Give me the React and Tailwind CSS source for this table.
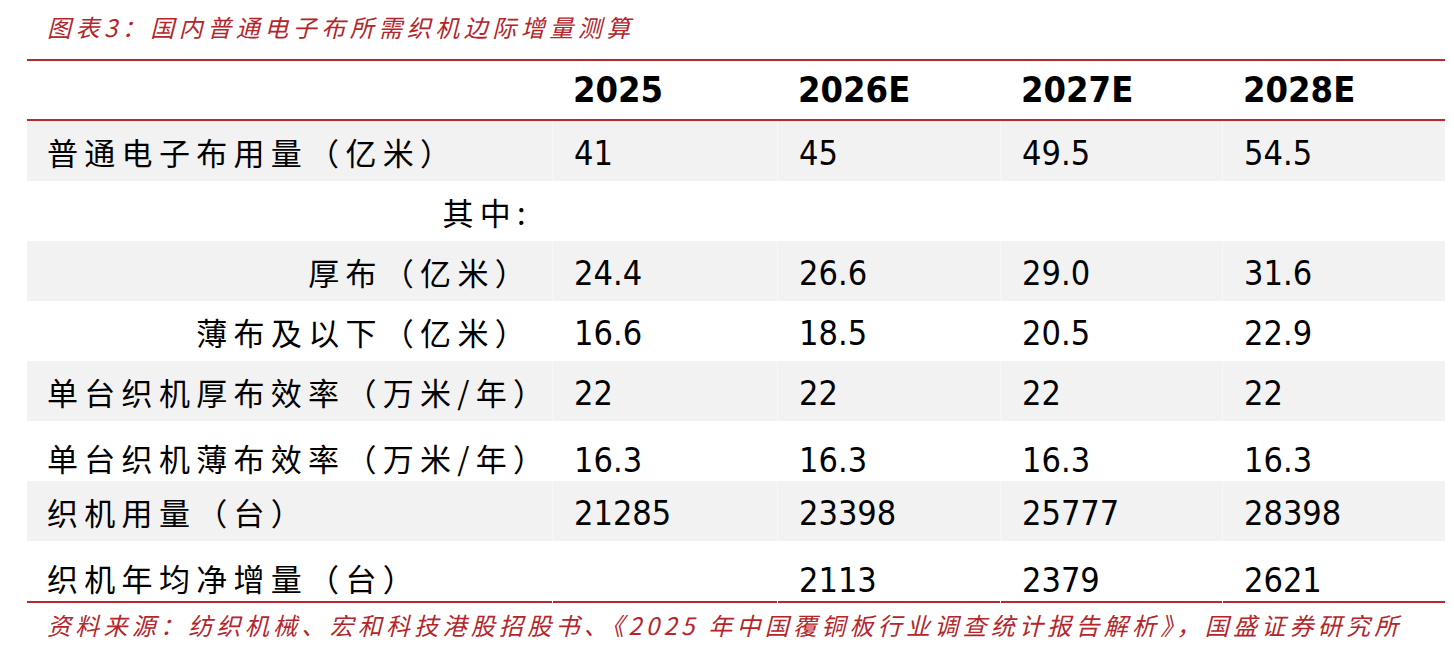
const rows = [
  { label: "普通电子布用量（亿米）", vals: ["41", "45", "49.5", "54.5"], gray: true },
  { label: "其中:", vals: ["", "", "", ""], right: true },
  { label: "厚布（亿米）", vals: ["24.4", "26.6", "29.0", "31.6"], gray: true, right: true },
  { label: "薄布及以下（亿米）", vals: ["16.6", "18.5", "20.5", "22.9"], right: true },
  { label: "单台织机厚布效率（万米/年）", vals: ["22", "22", "22", "22"], gray: true },
  { label: "单台织机薄布效率（万米/年）", vals: ["16.3", "16.3", "16.3", "16.3"], low: true },
  { label: "织机用量（台）", vals: ["21285", "23398", "25777", "28398"], gray: true },
  { label: "织机年均净增量（台）", vals: ["", "2113", "2379", "2621"], low: true },
];

const years = ["2025", "2026E", "2027E", "2028E"];

const Row = ({ row }) => {
  return (
    <div
      className={`grid grid-cols-[525px_225px_223px_222px_223px] h-[60px] ${
        row.gray ? "bg-[#f2f2f2]" : "bg-white"
      }`}
    >
      <div
        className={`flex items-center text-[31px] tracking-[6.3px] text-black font-['Noto_Sans_CJK_SC',sans-serif] ${
          row.right ? "justify-end pr-[20px]" : "pl-[20px]"
        } ${row.low ? "pt-[10px]" : "pt-[2px]"}`}
      >
        {row.label}
      </div>
      {row.vals.map((v, i) => (
        <div
          key={i}
          className={`flex items-center pl-[21px] text-[34px] text-black border-l font-['DejaVu_Sans_Condensed','Liberation_Sans',sans-serif] ${
            row.gray ? "border-[#f8f8f8]" : "border-white"
          } ${row.low ? "pt-[14px]" : "pt-[4px]"}`}
        >
          {v}
        </div>
      ))}
    </div>
  );
};

export default function App() {
  return (
    <div className="w-[1454px] h-[672px] bg-white overflow-hidden">
      <div className="h-[59px] pl-[47px] pt-[9px] text-[24px] italic tracking-[4.5px] text-[#b3262b] font-['Noto_Sans_CJK_SC',sans-serif]">
        图表3：国内普通电子布所需织机边际增量测算
      </div>
      <div className="ml-[27px] w-[1418px] border-y-2 border-[#b8282e]">
        <div className="grid grid-cols-[525px_225px_223px_222px_223px] h-[60px] border-b-2 border-[#b8282e]">
          <div />
          {years.map((y) => (
            <div
              key={y}
              className="flex items-center pl-[21px] text-[36px] font-bold text-black font-['DejaVu_Sans_Condensed','Liberation_Sans',sans-serif]"
            >
              {y}
            </div>
          ))}
        </div>
        {rows.map((r, idx) => (
          <Row key={idx} row={r} />
        ))}
      </div>
      <div className="pl-[47px] pt-[4px] text-[24px] italic tracking-[4.25px] text-[#b3262b] whitespace-nowrap font-['Noto_Sans_CJK_SC',sans-serif]">
        资料来源：纺织机械、宏和科技港股招股书、《2025 年中国覆铜板行业调查统计报告解析》，国盛证券研究所
      </div>
    </div>
  );
}
